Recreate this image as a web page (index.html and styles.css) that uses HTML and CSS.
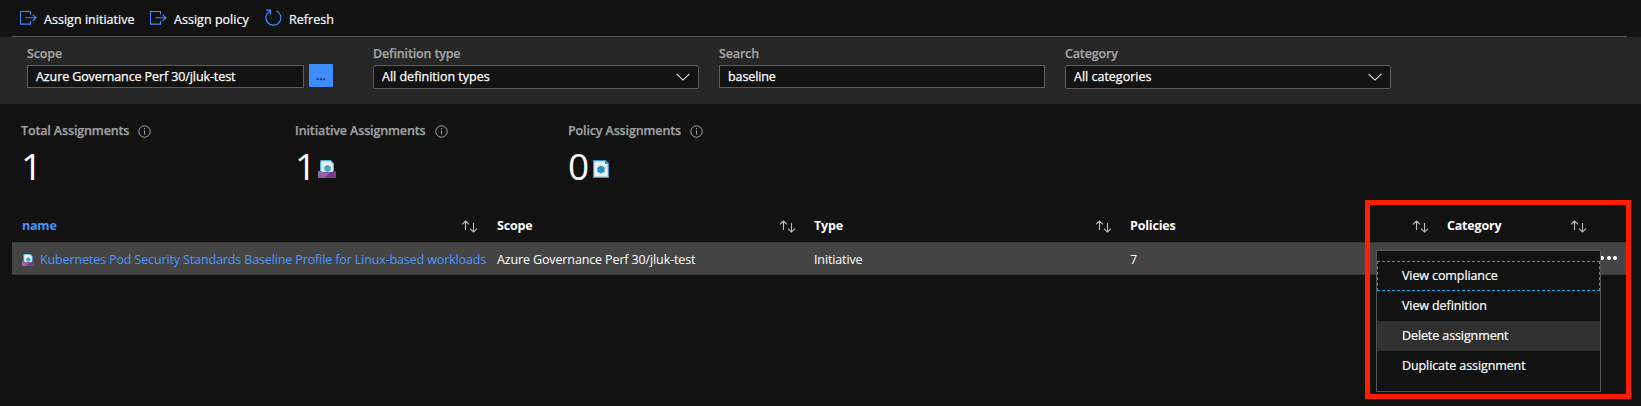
FILE: index.html
```html
<!DOCTYPE html>
<html lang="en">
<head>
<meta charset="utf-8">
<title>Policy assignments</title>
<link rel="stylesheet" href="styles.css">
</head>
<body>
<svg class="defs" aria-hidden="true">
  <symbol id="assign" viewBox="0 0 17 14"><path d="M10.5 3.5V.5H.5v12.6h10v-3M5.5 6.8h10.3M12.7 3.6 15.9 6.8l-3.2 3.2" fill="none" stroke="#3f8cff" stroke-width="1.1"/></symbol>
  <symbol id="refresh" viewBox="0 0 17 17"><path d="M11.4 1.8A7.5 7.5 0 1 1 4.6 2.2M1.3 1.2h4.2v4" fill="none" stroke="#3f8cff" stroke-width="1.2"/></symbol>
  <symbol id="chevron" viewBox="0 0 14 8"><path d="M.6.8 7 7.1 13.4.8" fill="none" stroke="#e8e8e8" stroke-width="1.1"/></symbol>
  <symbol id="info" viewBox="0 0 13 13"><circle cx="6.5" cy="6.5" r="5.7" fill="none" stroke="#a2a2a2"/><path d="M6.5 5.5v4M6.5 3.2v1.2" stroke="#a2a2a2"/></symbol>
  <symbol id="sort" viewBox="0 0 17 13"><path d="M4.5 10V1M1 4.3 4.5.9 8 4.3M12.5 3v9M9 8.7l3.5 3.4L16 8.7" fill="none" stroke="#bdbdbd" stroke-width="1.1"/></symbol>
  <symbol id="initiative" viewBox="0 0 18 18"><path d="M2 11V1.5Q2 0 3.5 0h9L16 3.2V11z" fill="#59b4d9"/><path d="M3.3 12V2.2q0-1 1-1h8L14.8 4v8z" fill="#dff1f9"/><path d="m9.5 5 3.2 1.6v3.6L9.5 12 6.3 10.2V6.600z" fill="#4a9fcf"/><path d="M0 11h3.300v1.200h12V11H18v7H0z" fill="#763f92"/><path d="M0 11h3.300v1.200H12L6.500 18H0z" fill="#9662a8"/></symbol>
  <symbol id="policy" viewBox="0 0 16 18"><path d="M0 0h12.500L16 3v15H0z" fill="#3999c6"/><path d="M1.200 1.200H12V4h2.800v12.800H1.200z" fill="#e3f2fa"/><path d="m8 5.600 3.700 1.900v4.200L8 13.600 4.300 11.700V7.500z" fill="#2f8fc5"/></symbol>
</svg>
<div class="page">
  <header class="toolbar">
    <button class="cmd"><svg class="i-assign"><use href="#assign"/></svg><span>Assign initiative</span></button>
    <button class="cmd cmd-policy"><svg class="i-assign"><use href="#assign"/></svg><span>Assign policy</span></button>
    <button class="cmd cmd-refresh"><svg class="i-refresh"><use href="#refresh"/></svg><span>Refresh</span></button>
  </header>
  <section class="filters">
    <div class="field"><div class="label">Scope</div><div class="scope"><div class="box"><span>Azure Governance Perf 30/jluk-test</span></div><button class="more">...</button></div></div>
    <div class="field"><div class="label">Definition type</div><div class="box select"><span>All definition types</span><svg class="i-chev"><use href="#chevron"/></svg></div></div>
    <div class="field"><div class="label">Search</div><div class="box"><span>baseline</span></div></div>
    <div class="field"><div class="label">Category</div><div class="box select"><span>All categories</span><svg class="i-chev"><use href="#chevron"/></svg></div></div>
  </section>
  <section class="stats">
    <div class="stat"><div class="stat-label"><span>Total Assignments</span><svg class="i-info"><use href="#info"/></svg></div><div class="value"><span>1</span></div></div>
    <div class="stat"><div class="stat-label"><span>Initiative Assignments</span><svg class="i-info"><use href="#info"/></svg></div><div class="value"><span>1</span><svg class="i-init"><use href="#initiative"/></svg></div></div>
    <div class="stat"><div class="stat-label"><span>Policy Assignments</span><svg class="i-info"><use href="#info"/></svg></div><div class="value"><span>0</span><svg class="i-pol"><use href="#policy"/></svg></div></div>
  </section>
  <section class="table">
    <div class="row head">
      <div class="cell sorted"><span>name</span><svg class="i-sort"><use href="#sort"/></svg></div>
      <div class="cell"><span>Scope</span><svg class="i-sort"><use href="#sort"/></svg></div>
      <div class="cell"><span>Type</span><svg class="i-sort"><use href="#sort"/></svg></div>
      <div class="cell"><span>Policies</span><svg class="i-sort"><use href="#sort"/></svg></div>
      <div class="cell"><span>Category</span><svg class="i-sort"><use href="#sort"/></svg></div>
    </div>
    <div class="row data">
      <div class="cell link"><svg class="i-row"><use href="#initiative"/></svg><span>Kubernetes Pod Security Standards Baseline Profile for Linux-based workloads</span></div>
      <div class="cell"><span>Azure Governance Perf 30/jluk-test</span></div>
      <div class="cell"><span>Initiative</span></div>
      <div class="cell"><span>7</span></div>
      <div class="cell"></div>
      <div class="dots"><i></i><i></i><i></i></div>
    </div>
  </section>
  <div class="highlight"></div>
  <nav class="menu">
    <div class="item focused"><span>View compliance</span></div>
    <div class="item"><span>View definition</span></div>
    <div class="item active"><span>Delete assignment</span></div>
    <div class="item"><span>Duplicate assignment</span></div>
  </nav>
</div>
</body>
</html>
```
FILE: styles.css
```css
* { box-sizing: border-box; }
body { margin: 0; background: #121212; }
button { border: 0; padding: 0; background: none; font: inherit; letter-spacing: inherit; color: inherit; }
svg { display: block; flex: none; }
.defs { position: absolute; width: 0; height: 0; }
.page {
  position: relative; width: 1641px; height: 406px; overflow: hidden;
  background: #121212; color: #fff;
  font: 500 12.5px/18px "Open Sans", "Noto Sans", sans-serif;
  letter-spacing: -0.13px; white-space: nowrap;
}
.toolbar { display: flex; align-items: center; height: 37px; margin: 0 14px 0 12px; padding-left: 8px; border-bottom: 1px solid #565656; -webkit-text-stroke: 0.2px; }
.cmd { display: flex; align-items: center; gap: 7px; width: 130px; height: 36px; padding-top: 3px; letter-spacing: 0.03px; }
.cmd-policy { width: 115px; }
.i-assign { width: 17px; height: 14px; margin-top: -4px; }
.i-refresh { width: 17px; height: 17px; margin-top: -4px; }
.filters { display: grid; grid-template-columns: 326px 326px 326px 326px; gap: 20px; height: 67px; padding: 8px 0 0 27px; background: #262626; -webkit-text-stroke: 0.25px; }
.label { height: 20px; color: #a0a0a0; font-weight: 600; letter-spacing: -0.15px; }
.scope { display: flex; align-items: flex-start; gap: 5px; }
.box { display: flex; align-items: center; justify-content: space-between; width: 326px; height: 23px; padding: 0 8px; border: 1px solid #5c5c5c; background: #121212; letter-spacing: -0.1px; }
.scope .box { width: 277px; }
.select { height: 24px; border-radius: 2px; letter-spacing: 0; }
.i-chev { width: 14px; height: 8px; }
.more { width: 24px; height: 23px; margin-top: -1px; border-radius: 1px; background: #3f8cff; color: #111; }
.stats { display: grid; grid-template-columns: 274px 273px 273px; height: 98px; padding: 18px 0 0 21px; }
.stat-label { display: flex; align-items: center; gap: 9px; color: #a0a0a0; font-weight: 600; letter-spacing: -0.13px; -webkit-text-stroke: 0.25px; }
.i-info { width: 13px; height: 13px; }
.value { display: flex; align-items: flex-end; gap: 3px; height: 39px; font-size: 37px; line-height: 39px; letter-spacing: -1.2px; }
.value span { margin-bottom: -6px; }
.i-init { width: 18px; height: 18px; margin-bottom: 1px; }
.i-pol { width: 16px; height: 18px; margin: 0 0 1px 2px; }
.table { margin: 0 14px 0 12px; }
.row { display: grid; grid-template-columns: 475px 317px 316px 317px 158px 1fr; padding-left: 10px; align-items: center; }
.head { height: 40px; padding-top: 8px; font-weight: 700; letter-spacing: -0.2px; }
.data { height: 33px; background: #444; border-top: 1px solid #373737; border-bottom: 1px solid #373737; }
.data span { padding-top: 2px; }
.cell { display: flex; align-items: center; }
.head .cell { justify-content: space-between; padding-right: 18px; }
.sorted, .link { color: #4894fe; }
.sorted { margin-right: 1px; }
.i-sort { width: 17px; height: 13px; }
.i-row { width: 12px; height: 12px; margin: 2px 6px 0 0; }
.dots { display: flex; gap: 2.5px; margin: -2px 0 0 -5px; }
.dots i { width: 4px; height: 4px; border-radius: 50%; background: #fff; }
.highlight { position: absolute; left: 1365px; top: 200px; width: 266px; height: 199px; border: 5px solid #ff1e00; }
.menu { position: absolute; left: 1376px; top: 250px; width: 225px; height: 142px; padding-top: 10px; border: 1px solid #555; background: #121212; letter-spacing: -0.1px; -webkit-text-stroke: 0.2px; }
.item { height: 30px; padding-left: 24px; line-height: 27px; border: 1px dashed transparent; }
.focused { border-color: #00a8e8; }
.active { background: #303030; border: 0; padding-left: 25px; line-height: 29px; }
```
